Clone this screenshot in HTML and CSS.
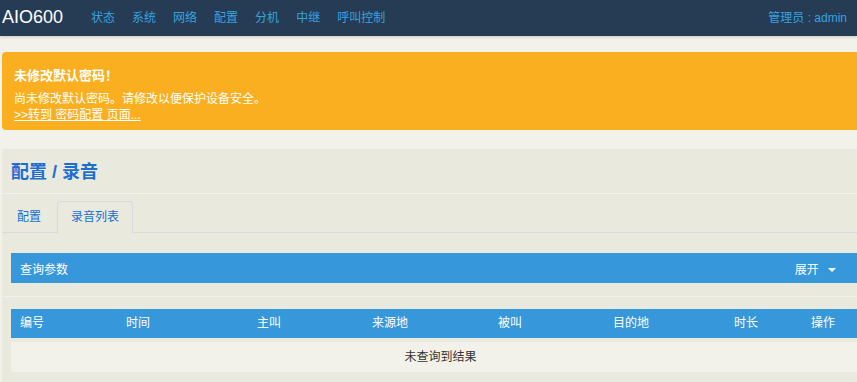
FILE: index.html
```html
<!DOCTYPE html>
<html lang="zh">
<head>
    <meta charset="UTF-8">
    <meta name="viewport" content="width=device-width, initial-scale=1.0">
    <title>AIO600 - 录音</title>
    <link rel="stylesheet" href="styles.css">
</head>
<body>
    <div class="navbar">
        <a class="brand" href="#">AIO600</a>
        <ul class="nav">
            <li><a href="#">状态</a></li>
            <li><a href="#">系统</a></li>
            <li><a href="#">网络</a></li>
            <li><a href="#">配置</a></li>
            <li><a href="#">分机</a></li>
            <li><a href="#">中继</a></li>
            <li><a href="#">呼叫控制</a></li>
        </ul>
        <a class="user" href="#">管理员 : admin</a>
    </div>

    <div class="page">
        <div class="alert">
            <h4>未修改默认密码！</h4>
            <p>尚未修改默认密码。请修改以便保护设备安全。</p>
            <a href="#">&gt;&gt;转到 密码配置 页面...</a>
        </div>

        <div class="panel">
            <h2 class="title">配置 / 录音</h2>
            <ul class="tabs">
                <li><a href="#">配置</a></li>
                <li class="active"><a href="#">录音列表</a></li>
            </ul>

            <div class="section">
                <div class="query-bar">
                    <span>查询参数</span>
                    <a class="toggle" href="#">展开 <span class="caret"></span></a>
                </div>
            </div>

            <div class="section results">
                <div class="grid head">
                    <div>编号</div>
                    <div>时间</div>
                    <div>主叫</div>
                    <div>来源地</div>
                    <div>被叫</div>
                    <div>目的地</div>
                    <div>时长</div>
                    <div>操作</div>
                </div>
                <div class="empty">未查询到结果</div>
            </div>
        </div>
    </div>
</body>
</html>
```

FILE: styles.css
```css
body {
    margin: 0;
    padding: 0;
    background-color: #f2f2ea;
    font-family: "Liberation Sans", "Noto Sans CJK SC", sans-serif;
    font-size: 12px;
    color: #333;
    overflow: hidden;
}

a {
    text-decoration: none;
}

ul {
    list-style: none;
    margin: 0;
    padding: 0;
}

/* top bar */
.navbar {
    display: flex;
    align-items: center;
    height: 36px;
    padding: 0 10px 0 2px;
    background-color: #263c55;
    box-shadow: 0 1px 3px rgba(0, 0, 0, 0.18);
}

.brand {
    color: #fff;
    font-size: 18px;
    line-height: 36px;
    margin-top: -2px;
}

.nav {
    display: flex;
    gap: 17px;
    margin-left: 28px;
}

.nav a,
.user {
    color: #35a2e0;
    font-size: 12px;
    line-height: 36px;
}

.user {
    margin-left: auto;
}

.page {
    width: 877px;
    padding-left: 2px;
}

/* warning */
.alert {
    margin-top: 16px;
    padding: 14px 12px 7px;
    background-color: #f9af1f;
    border-radius: 4px 0 0 4px;
    color: #fff;
}

.alert h4 {
    margin: 0 0 7px;
    font-family: "Noto Sans CJK SC", sans-serif;
    font-size: 13px;
    line-height: 18px;
}

.alert p {
    margin: 0;
    line-height: 16px;
}

.alert a {
    display: block;
    color: #fff;
    line-height: 16px;
    text-decoration: underline;
}

/* main panel */
.panel {
    margin-top: 19px;
    padding-bottom: 20px;
    background-color: #e9e9dd;
}

.title {
    margin: 0;
    padding: 13px 9px 10px;
    font-size: 18px;
    line-height: 21px;
    color: #1b6fd1;
    border-bottom: 1px solid #f2f2ec;
}

.tabs {
    display: flex;
    margin-top: 7px;
    padding-left: 1px;
    border-bottom: 1px solid #d8d8df;
}

.tabs li {
    margin-right: 2px;
    margin-bottom: -1px;
}

.tabs a {
    display: block;
    padding: 0 13px;
    line-height: 30px;
    color: #1570d0;
    border: 1px solid transparent;
    border-radius: 4px 4px 0 0;
}

.tabs .active a {
    border-color: #d8d8df;
    border-bottom-color: #e9e9dd;
    background-color: #e9e9dd;
}

.section {
    padding: 20px 9px 13px;
}

.query-bar {
    display: flex;
    align-items: center;
    height: 30px;
    padding: 0 34px 0 9px;
    background-color: #3797db;
    color: #fff;
}

.toggle {
    margin-left: auto;
    color: #fff;
}

.caret {
    display: inline-block;
    width: 0;
    height: 0;
    margin-left: 6px;
    vertical-align: middle;
    border-top: 4px solid #fff;
    border-left: 4px solid transparent;
    border-right: 4px solid transparent;
}

.results {
    padding-top: 12px;
    padding-bottom: 0;
    border-top: 1px solid #f2f2ec;
}

.grid {
    display: grid;
    grid-template-columns: 106px 131px 115px 126px 115px 121px 77px 1fr;
}

.head {
    height: 29px;
    line-height: 29px;
    background-color: #3797db;
    color: #fff;
}

.head div {
    padding-left: 9px;
}

.empty {
    margin-top: 4px;
    height: 30px;
    line-height: 30px;
    text-align: center;
    background-color: #f2f2ea;
    color: #333;
}
```
